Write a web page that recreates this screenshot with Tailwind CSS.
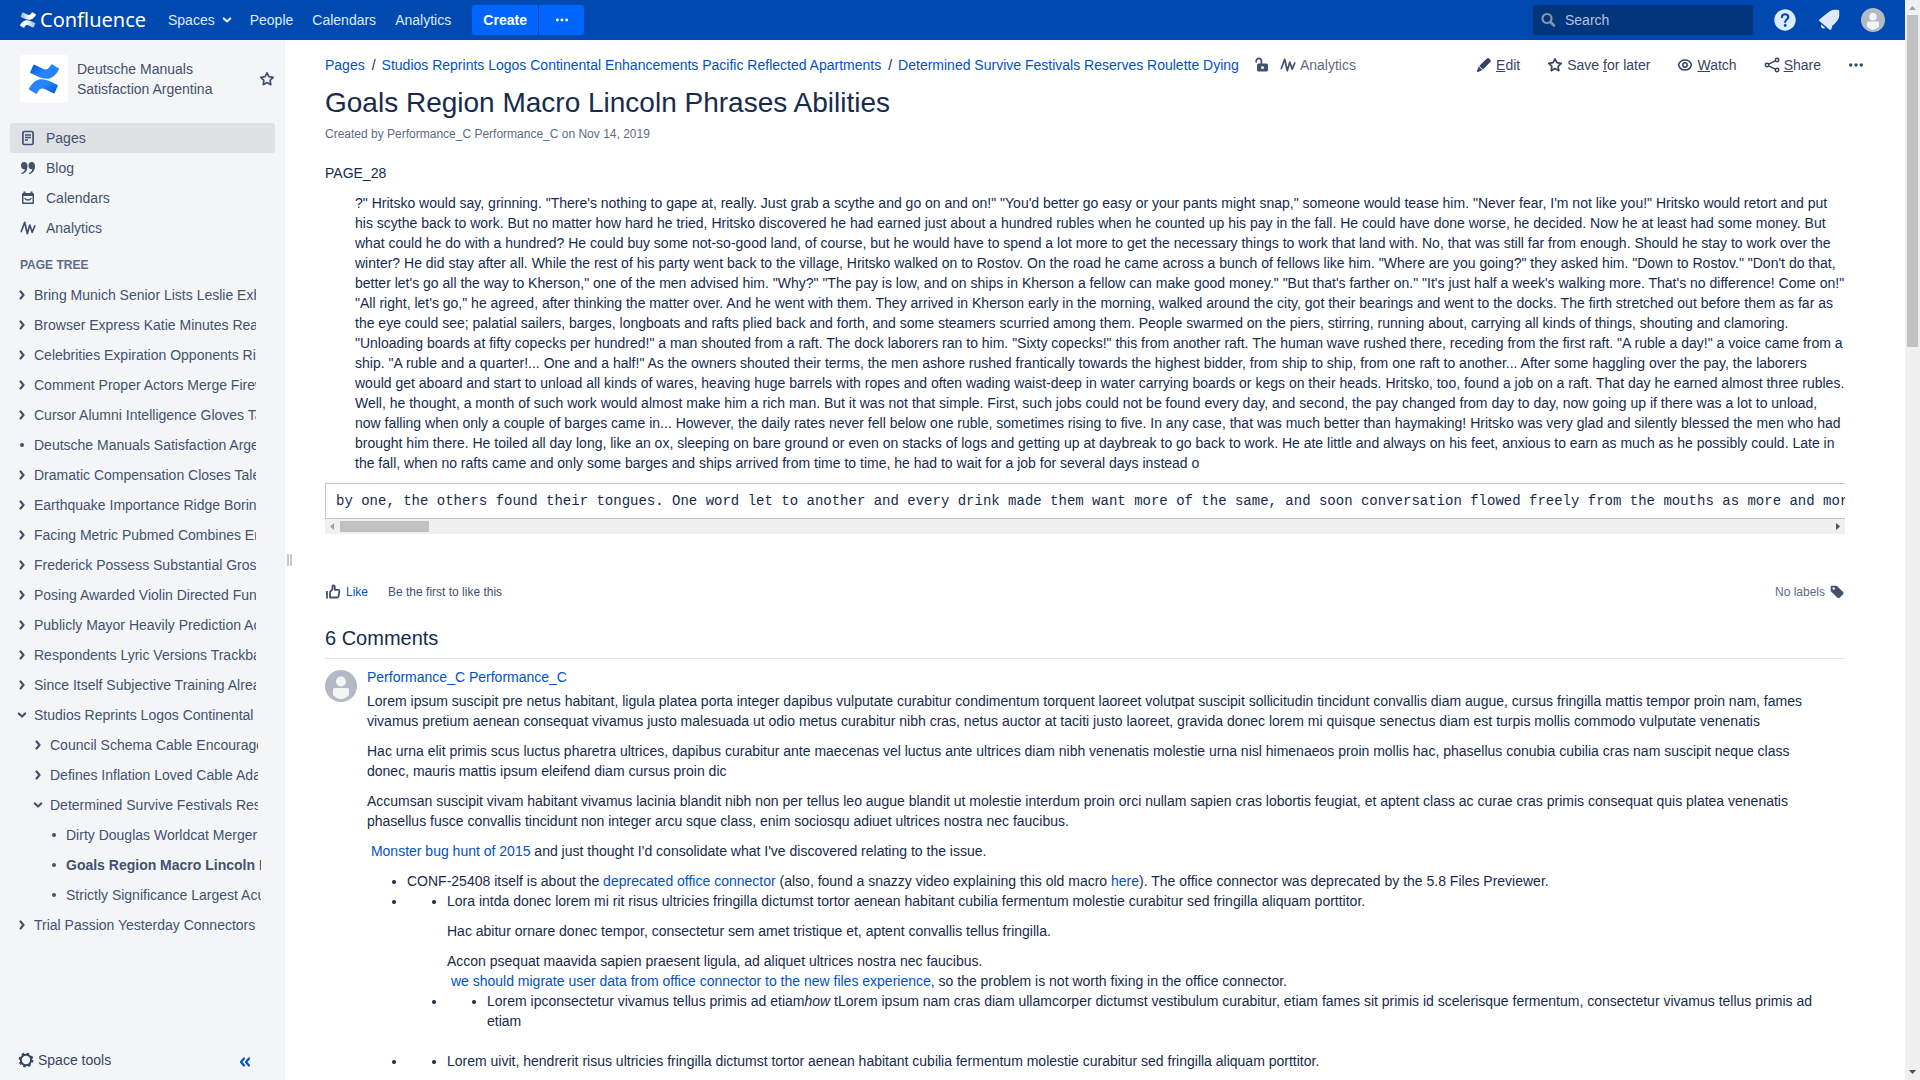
<!DOCTYPE html>
<html lang="en">
<head>
<meta charset="utf-8">
<title>Goals Region Macro Lincoln Phrases Abilities - Confluence</title>
<script src="https://cdn.jsdelivr.net/npm/@tailwindcss/browser@4"></script>
</head>
<body class="flex h-screen overflow-hidden bg-white font-['Liberation_Sans',Arial,sans-serif] text-sm text-[#172b4d]">

<svg class="hidden" aria-hidden="true">
  <symbol id="right" viewBox="0 0 16 16"><path d="M6.500 4.500 9.500 8l-3 3.500" fill="none" stroke="currentColor" stroke-width="2.200" stroke-linecap="round" stroke-linejoin="round"/></symbol>
  <symbol id="down" viewBox="0 0 16 16"><path d="M4.800 6.500 8 9.500l3.200-3" fill="none" stroke="currentColor" stroke-width="2.200" stroke-linecap="round" stroke-linejoin="round"/></symbol>
  <symbol id="dot" viewBox="0 0 16 16"><circle cx="8" cy="8" r="2" fill="currentColor"/></symbol>
  <symbol id="star" viewBox="0 0 16 16"><path d="M8 1.800 9.900 5.700l4.300.6-3.100 3 .7 4.400L8 11.600l-3.800 2.100.7-4.400-3.100-3 4.300-.6z" fill="none" stroke="currentColor" stroke-width="1.700" stroke-linejoin="round"/></symbol>
  <symbol id="pulse" viewBox="0 0 16 16"><path d="M1.300 11.500 4.700 2.300l2.600 11.400L9.800 5l2.400 7.300L14.800 6" fill="none" stroke="currentColor" stroke-width="1.700" stroke-linecap="round" stroke-linejoin="round"/></symbol>
  <symbol id="more" viewBox="0 0 16 16"><g fill="currentColor"><circle cx="2.700" cy="8" r="1.700"/><circle cx="8" cy="8" r="1.700"/><circle cx="13.300" cy="8" r="1.700"/></g></symbol>
  <symbol id="avatar" viewBox="0 0 32 32"><circle cx="16" cy="16" r="16" fill="#b3bac5"/><circle cx="16" cy="11.500" r="5" fill="#f4f5f7"/><path d="M8 19.500q0-1.500 1.500-1.500h13q1.500 0 1.500 1.500V25q-3.500 4-8 4t-8-4z" fill="#f4f5f7"/></symbol>
</svg>

<div class="flex min-w-0 flex-1 flex-col">

  <header class="flex h-10 shrink-0 items-center bg-[#0049b0] pr-5 pl-5 text-[#deebff]">
    <a href="#" class="flex items-center gap-1 text-white">
      <svg class="size-4" viewBox="0 0 24 24">
        <defs>
          <linearGradient id="w1" x1="0" x2=".6"><stop offset="0" stop-color="#fff" stop-opacity=".6"/><stop offset="1" stop-color="#fff"/></linearGradient>
          <linearGradient id="w2" x1="1" x2=".4"><stop offset="0" stop-color="#fff" stop-opacity=".6"/><stop offset="1" stop-color="#fff"/></linearGradient>
        </defs>
        <path fill="url(#w2)" d="M.87 18.257c-.248.382-.53.875-.763 1.245a.764.764 0 0 0 .255 1.040l4.965 3.054a.764.764 0 0 0 1.058-.26c.199-.332.454-.763.733-1.221 1.967-3.247 3.945-2.853 7.508-1.146l4.957 2.337a.764.764 0 0 0 1.028-.382l2.364-5.346a.764.764 0 0 0-.382-1 599.851 599.851 0 0 1-4.965-2.361C10.911 10.970 5.224 11.185.87 18.257z"/>
        <path fill="url(#w1)" d="M23.131 5.743c.249-.405.531-.875.764-1.250a.764.764 0 0 0-.256-1.034L18.675.404a.764.764 0 0 0-1.058.26c-.195.335-.451.763-.734 1.225-1.966 3.246-3.945 2.850-7.508 1.146L4.437.694a.764.764 0 0 0-1.027.382L1.046 6.422a.764.764 0 0 0 .382 1c1.039.49 3.105 1.467 4.965 2.361 6.698 3.246 12.392 3.029 16.738-4.040z"/>
      </svg>
      <span class="w-[108px] font-['Noto_Sans',sans-serif] text-xl leading-8">Confluence</span>
    </a>
    <nav class="ml-5 flex items-center gap-[19px]">
      <button class="flex items-center gap-1">Spaces <svg class="size-4"><use href="#down"/></svg></button>
      <a href="#" class="-ml-1">People</a>
      <a href="#">Calendars</a>
      <a href="#">Analytics</a>
    </nav>
    <div class="ml-[21px] flex h-[30px] gap-px font-bold text-white">
      <button class="w-[66px] rounded-l-[3px] bg-[#0065ff]">Create</button>
      <button class="flex w-[45px] items-center justify-center rounded-r-[3px] bg-[#0065ff]" aria-label="More create options"><svg class="size-3.5"><use href="#more"/></svg></button>
    </div>
    <div class="ml-auto flex items-center">
      <label class="flex h-[30px] w-[220px] items-center gap-2 rounded-[3px] bg-[#03357d] pl-2">
        <svg class="size-4 text-[#8993a4]" viewBox="0 0 16 16" fill="none" stroke="currentColor"><circle cx="6" cy="6.500" r="4.500" stroke-width="2.200"/><path d="m9.500 10 3.500 3.500" stroke-width="2.600" stroke-linecap="round"/></svg>
        <input type="text" placeholder="Search" aria-label="Search" class="w-40 bg-transparent outline-none placeholder:text-[#b2c3e0]">
      </label>
      <button class="ml-5 size-6" aria-label="Help">
        <svg viewBox="0 0 24 24"><circle cx="12" cy="12" r="10.700" fill="#deebff"/><path d="M8.900 9.300c0-1.900 1.300-3.100 3.200-3.100s3.200 1.200 3.200 2.900c0 2.400-3.100 2.500-3.100 5" fill="none" stroke="#0049b0" stroke-width="2.100" stroke-linecap="round"/><circle cx="12.200" cy="17.500" r="1.400" fill="#0049b0"/></svg>
      </button>
      <button class="ml-5 size-6" aria-label="Notifications">
        <svg viewBox="0 0 24 24" fill="#deebff"><path d="M2.600 11.200c-.9.800-.8 1.400.1 2L12.400 21.600c.9.700 1.500.5 2-.5l.9-3.300c3.500-3.300 6.300-5.500 6.900-9.600V3.100c0-.8-.3-1.200-1.200-1.200-3.500-.3-6.500-.2-9.300 2.100z"/><path d="m4.500 16.600 3.700 3.300c-1.200 1-2.600.8-3.400-.1s-1-2-.3-3.200z"/></svg>
      </button>
      <button class="ml-5 size-6" aria-label="Profile"><svg class="size-6"><use href="#avatar"/></svg></button>
    </div>
  </header>

  <div class="flex min-h-0 flex-1">
    <aside class="flex w-[285px] shrink-0 flex-col bg-[#f4f5f7] text-[#42526e]">
      <div class="flex items-center pt-[15px] pr-2.5 pl-5">
        <a href="#" class="flex size-12 items-center justify-center rounded-[3px] bg-white" aria-label="Space home">
          <svg class="size-[30px]" viewBox="0 0 24 24">
            <defs>
              <linearGradient id="b1" x1="0" x2=".6" y2=".4"><stop offset="0" stop-color="#0052cc"/><stop offset="1" stop-color="#2684ff"/></linearGradient>
              <linearGradient id="b2" x1="1" y1="1" x2=".4" y2=".6"><stop offset="0" stop-color="#0052cc"/><stop offset="1" stop-color="#2684ff"/></linearGradient>
            </defs>
            <path fill="url(#b2)" d="M.87 18.257c-.248.382-.53.875-.763 1.245a.764.764 0 0 0 .255 1.040l4.965 3.054a.764.764 0 0 0 1.058-.26c.199-.332.454-.763.733-1.221 1.967-3.247 3.945-2.853 7.508-1.146l4.957 2.337a.764.764 0 0 0 1.028-.382l2.364-5.346a.764.764 0 0 0-.382-1 599.851 599.851 0 0 1-4.965-2.361C10.911 10.970 5.224 11.185.87 18.257z"/>
            <path fill="url(#b1)" d="M23.131 5.743c.249-.405.531-.875.764-1.250a.764.764 0 0 0-.256-1.034L18.675.404a.764.764 0 0 0-1.058.26c-.195.335-.451.763-.734 1.225-1.966 3.246-3.945 2.850-7.508 1.146L4.437.694a.764.764 0 0 0-1.027.382L1.046 6.422a.764.764 0 0 0 .382 1c1.039.49 3.105 1.467 4.965 2.361 6.698 3.246 12.392 3.029 16.738-4.040z"/>
          </svg>
        </a>
        <a href="#" class="ml-[9px] w-[150px] leading-5">Deutsche Manuals Satisfaction Argentina</a>
        <button class="ml-auto" aria-label="Star this space"><svg class="size-4"><use href="#star"/></svg></button>
      </div>

      <nav class="mt-5 px-2.5">
        <a href="#" class="flex h-[30px] items-center gap-2.5 rounded-[3px] bg-[#dfe1e5] pl-2.5">
          <svg class="size-4" viewBox="0 0 16 16" fill="none" stroke="currentColor"><rect x="2.900" y="1.500" width="10.200" height="13" rx="1.600" stroke-width="1.700"/><path d="M5 5h6M5 7.500h6M5 10h3" stroke-width="1.400"/></svg>
          Pages</a>
        <a href="#" class="flex h-[30px] items-center gap-2.5 pl-2.5">
          <svg class="size-4" viewBox="0 0 16 16" fill="currentColor"><path id="q" d="M4 2c2.200 0 3.500 1.600 3.500 4.200 0 4.200-2.300 6.900-5.300 7.800-.9.200-1.200-.7-.4-1.100 1.700-.9 2.700-2 3-3.700C2.500 9.700 1 8 1 5.400 1 3.400 2.200 2 4 2z"/><use href="#q" x="7.500"/></svg>
          Blog</a>
        <a href="#" class="flex h-[30px] items-center gap-2.5 pl-2.5">
          <svg class="size-4" viewBox="0 0 16 16"><path d="M3.500 1.500h2V3h5V1.500h2V3H13a1 1 0 0 1 1 1v9a1 1 0 0 1-1 1H3a1 1 0 0 1-1-1V4a1 1 0 0 1 1-1h.5zM3.500 6v6.500h9V6z" fill="currentColor" fill-rule="evenodd"/><path d="M5 8.500c1 2 5 2 6 0" fill="none" stroke="currentColor" stroke-width="1.400" stroke-linecap="round"/></svg>
          Calendars</a>
        <a href="#" class="flex h-[30px] items-center gap-2.5 pl-2.5">
          <svg class="size-4"><use href="#pulse"/></svg>
          Analytics</a>
      </nav>

      <h2 class="mt-3 pl-5 text-xs leading-5 font-bold text-[#5e6c84]">PAGE TREE</h2>

      <ul class="mt-[5px] pl-3.5 whitespace-nowrap [&_a]:min-w-0 [&_a]:flex-1 [&_a]:overflow-hidden [&_a]:leading-5 [&_div]:flex [&_div]:h-[30px] [&_div]:items-center [&_div]:gap-1 [&_svg]:size-4 [&_svg]:shrink-0">
        <li><div class="pr-[29px]"><svg><use href="#right"/></svg><a href="#">Bring Munich Senior Lists Leslie Exhibit</a></div></li>
        <li><div class="pr-[29px]"><svg><use href="#right"/></svg><a href="#">Browser Express Katie Minutes Ready</a></div></li>
        <li><div class="pr-[29px]"><svg><use href="#right"/></svg><a href="#">Celebrities Expiration Opponents Rico</a></div></li>
        <li><div class="pr-[29px]"><svg><use href="#right"/></svg><a href="#">Comment Proper Actors Merge Firewall</a></div></li>
        <li><div class="pr-[29px]"><svg><use href="#right"/></svg><a href="#">Cursor Alumni Intelligence Gloves Tale</a></div></li>
        <li><div class="pr-[29px]"><svg><use href="#dot"/></svg><a href="#">Deutsche Manuals Satisfaction Argentina</a></div></li>
        <li><div class="pr-[29px]"><svg><use href="#right"/></svg><a href="#">Dramatic Compensation Closes Talent</a></div></li>
        <li><div class="pr-[29px]"><svg><use href="#right"/></svg><a href="#">Earthquake Importance Ridge Boring</a></div></li>
        <li><div class="pr-[29px]"><svg><use href="#right"/></svg><a href="#">Facing Metric Pubmed Combines Enter</a></div></li>
        <li><div class="pr-[29px]"><svg><use href="#right"/></svg><a href="#">Frederick Possess Substantial Gross</a></div></li>
        <li><div class="pr-[29px]"><svg><use href="#right"/></svg><a href="#">Posing Awarded Violin Directed Funds</a></div></li>
        <li><div class="pr-[29px]"><svg><use href="#right"/></svg><a href="#">Publicly Mayor Heavily Prediction Acres</a></div></li>
        <li><div class="pr-[29px]"><svg><use href="#right"/></svg><a href="#">Respondents Lyric Versions Trackback</a></div></li>
        <li><div class="pr-[29px]"><svg><use href="#right"/></svg><a href="#">Since Itself Subjective Training Already</a></div></li>
        <li><div class="pr-[29px]"><svg><use href="#down"/></svg><a href="#">Studios Reprints Logos Continental Enhancements</a></div>
          <ul class="pl-4">
            <li><div class="pr-[27px]"><svg><use href="#right"/></svg><a href="#">Council Schema Cable Encouraged</a></div></li>
            <li><div class="pr-[27px]"><svg><use href="#right"/></svg><a href="#">Defines Inflation Loved Cable Adam</a></div></li>
            <li><div class="pr-[27px]"><svg><use href="#down"/></svg><a href="#">Determined Survive Festivals Reserves</a></div>
              <ul class="pl-4">
                <li><div class="pr-6"><svg><use href="#dot"/></svg><a href="#">Dirty Douglas Worldcat Merger</a></div></li>
                <li><div class="pr-6"><svg><use href="#dot"/></svg><a href="#" class="font-bold">Goals Region Macro Lincoln Phrases</a></div></li>
                <li><div class="pr-6"><svg><use href="#dot"/></svg><a href="#">Strictly Significance Largest Acute</a></div></li>
              </ul></li>
          </ul></li>
        <li><div class="pr-[29px]"><svg><use href="#right"/></svg><a href="#">Trial Passion Yesterday Connectors</a></div></li>
      </ul>

      <div class="mt-auto flex h-10 items-center pr-8 pl-[18px] text-[#344563]">
        <button class="flex items-center gap-1">
          <svg class="size-4" viewBox="0 0 16 16" fill="none" stroke="currentColor"><circle cx="8" cy="8" r="5.200" stroke-width="2"/><circle cx="8" cy="8" r="6.500" stroke-width="1.800" stroke-dasharray="2.550 2.550"/></svg>
          Space tools</button>
        <button class="ml-auto pt-1 text-[#0052cc]" aria-label="Collapse sidebar"><svg class="size-4" viewBox="0 0 16 16" fill="none" stroke="currentColor" stroke-width="2.200" stroke-linecap="round" stroke-linejoin="round"><path d="M7 4.500 4 8l3 3.500M12 4.500 9 8l3 3.500"/></svg></button>
      </div>
    </aside>

    <div class="flex w-10 shrink-0 items-center gap-px pl-0.5" aria-hidden="true">
      <span class="h-3 w-0.5 bg-[#c1c7d0]"></span><span class="h-3 w-0.5 bg-[#c1c7d0]"></span>
    </div>

    <main class="min-w-0 flex-1 overflow-hidden leading-5">
      <div class="mt-2.5 flex h-[30px] items-center pr-[41px]">
        <nav class="flex text-[#0052cc]" aria-label="Breadcrumbs">
          <a href="#">Pages</a><span class="mr-1.5 ml-[7px] text-[#172b4d]">/</span>
          <a href="#">Studios Reprints Logos Continental Enhancements Pacific Reflected Apartments</a><span class="mr-1.5 ml-[7px] text-[#172b4d]">/</span>
          <a href="#">Determined Survive Festivals Reserves Roulette Dying</a>
        </nav>
        <button class="ml-[15px] text-[#42526e]" aria-label="Unrestricted"><svg class="size-4" viewBox="0 0 16 16"><path d="M2.200 5V4.200C2.200 2.500 3.300 1.400 4.800 1.400s2.600 1.100 2.600 2.800V7" fill="none" stroke="currentColor" stroke-width="1.700" stroke-linecap="round"/><path d="M4.500 6.500h8a1.500 1.500 0 0 1 1.500 1.500v5a1.500 1.500 0 0 1-1.500 1.500h-8A1.500 1.500 0 0 1 3 13V8a1.500 1.500 0 0 1 1.500-1.500zm4 2.500a1.500 1.500 0 1 0 0 3 1.500 1.500 0 0 0 0-3z" fill="currentColor" fill-rule="evenodd"/></svg></button>
        <button class="ml-2.5 flex items-center gap-1 text-[#5e6c84]"><svg class="size-4 text-[#42526e]"><use href="#pulse"/></svg>Analytics</button>
        <div class="ml-auto flex items-center gap-[27px] text-[#344563] [&_button]:flex [&_button]:items-center [&_button]:gap-1">
          <button><svg class="size-4" viewBox="0 0 16 16" fill="currentColor"><path d="m9.800 2.500 1.300-1.100c.6-.5 1.300-.5 1.900 0l1.500 1.500c.5.5.5 1.300 0 1.800L7 12.600 3.200 8.900z"/><path d="m2.700 9.500 3.700 3.600L2 15c-.7.200-1.200-.2-1-1z"/></svg><span><u>E</u>dit</span></button>
          <button><svg class="size-4"><use href="#star"/></svg><span>Save <u>f</u>or later</span></button>
          <button><svg class="size-4" viewBox="0 0 16 16" fill="none" stroke="currentColor" stroke-width="1.500"><path d="M1.500 8C2.500 4.700 5 3 8 3s5.500 1.700 6.500 5c-1 3.300-3.500 5-6.500 5S2.500 11.300 1.500 8z"/><circle cx="8" cy="8" r="2.200"/></svg><span><u>W</u>atch</span></button>
          <button><svg class="size-4" viewBox="0 0 16 16" fill="none" stroke="currentColor" stroke-width="1.500"><circle cx="3" cy="8" r="1.700"/><circle cx="13" cy="3" r="1.700"/><circle cx="13" cy="13" r="1.700"/><path d="m4.600 7.200 6.800-3.400M4.600 8.800l6.800 3.400"/></svg><span><u>S</u>hare</span></button>
          <button aria-label="More actions"><svg class="size-4"><use href="#more"/></svg></button>
        </div>
      </div>

      <div class="pr-[60px] [&_a]:text-[#0052cc]">
        <h1 class="mt-[7px] text-[28px] leading-8">Goals Region Macro Lincoln Phrases Abilities</h1>
        <p class="mt-[5px] text-xs leading-5 text-[#5e6c84]">Created by Performance_C Performance_C on Nov 14, 2019</p>

        <p class="mt-[19px]">PAGE_28</p>
        <p class="mt-2.5 pl-[30px]">?" Hritsko would say, grinning. "There's nothing to gape at, really. Just grab a scythe and go on and on!" "You'd better go easy or your pants might snap," someone would tease him. "Never fear, I'm not like you!" Hritsko would retort and put his scythe back to work. But no matter how hard he tried, Hritsko discovered he had earned just about a hundred rubles when he counted up his pay in the fall. He could have done worse, he decided. Now he at least had some money. But what could he do with a hundred? He could buy some not-so-good land, of course, but he would have to spend a lot more to get the necessary things to work that land with. No, that was still far from enough. Should he stay to work over the winter? He did stay after all. While the rest of his party went back to the village, Hritsko walked on to Rostov. On the road he came across a bunch of fellows like him. "Where are you going?" they asked him. "Down to Rostov." "Don't do that, better let's go all the way to Kherson," one of the men advised him. "Why?" "The pay is low, and on ships in Kherson a fellow can make good money." "But that's farther on." "It's just half a week's walking more. That's no difference! Come on!" "All right, let's go," he agreed, after thinking the matter over. And he went with them. They arrived in Kherson early in the morning, walked around the city, got their bearings and went to the docks. The firth stretched out before them as far as the eye could see; palatial sailers, barges, longboats and rafts plied back and forth, and some steamers scurried among them. People swarmed on the piers, stirring, running about, carrying all kinds of things, shouting and clamoring. "Unloading boards at fifty copecks per hundred!" a man shouted from a raft. The dock laborers ran to him. "Sixty copecks!" this from another raft. The human wave rushed there, receding from the first raft. "A ruble a day!" a voice came from a ship. "A ruble and a quarter!... One and a half!" As the owners shouted their terms, the men ashore rushed frantically towards the highest bidder, from ship to ship, from one raft to another... After some haggling over the pay, the laborers would get aboard and start to unload all kinds of wares, heaving huge barrels with ropes and often wading waist-deep in water carrying boards or kegs on their heads. Hritsko, too, found a job on a raft. That day he earned almost three rubles. Well, he thought, a month of such work would almost make him a rich man. But it was not that simple. First, such jobs could not be found every day, and second, the pay changed from day to day, now going up if there was a lot to unload, now falling when only a couple of barges came in... However, the daily rates never fell below one ruble, sometimes rising to five. In any case, that was much better than haymaking! Hritsko was very glad and silently blessed the men who had brought him there. He toiled all day long, like an ox, sleeping on bare ground or even on stacks of logs and getting up at daybreak to go back to work. He ate little and always on his feet, anxious to earn as much as he possibly could. Late in the fall, when no rafts came and only some barges and ships arrived from time to time, he had to wait for a job for several days instead o</p>

        <div class="mt-2.5">
          <pre class="overflow-hidden border border-r-0 border-[#c1c7d0] px-2.5 py-[7px] font-['Liberation_Mono',monospace] leading-5">by one, the others found their tongues. One word let to another and every drink made them want more of the same, and soon conversation flowed freely from the mouths as more and more men</pre>
          <div class="flex h-[15px] items-center bg-[#f0f0f0]" aria-hidden="true">
            <svg class="h-[15px] w-[15px]" viewBox="0 0 15 15"><path d="M9 4v7L5 7.500z" fill="#a3a3a3"/></svg>
            <span class="h-[11px] w-[89px] bg-[#c1c1c1]"></span>
            <svg class="ml-auto h-[15px] w-[15px]" viewBox="0 0 15 15"><path d="M6 4v7l4-3.500z" fill="#505050"/></svg>
          </div>
        </div>

        <div class="mt-12 flex h-5 items-center text-xs leading-5">
          <button class="flex items-center gap-[5px] text-[#0052cc]"><svg class="size-4 text-[#42526e]" viewBox="0 0 16 16" fill="none" stroke="currentColor" stroke-width="1.800" stroke-linejoin="round"><path d="M2 7V14.500"/><path d="M5 13.500V7.800l2.500-2.500V2.100c0-1 2.300-1 2.300.8V5.800h3.500c.8 0 1.200.6 1.100 1.300l-.8 5.100c-.1.800-.7 1.300-1.400 1.300z"/></svg>Like</button>
          <span class="ml-5 text-[#42526e]">Be the first to like this</span>
          <span class="ml-auto text-[#5e6c84]">No labels</span>
          <button class="ml-1" aria-label="Edit labels"><svg class="size-4 text-[#42526e]" viewBox="0 0 16 16"><path d="M2.500 1.800 7 1.700c.5 0 .9.200 1.200.5l5.900 5.900c.6.600.6 1.500 0 2.100L10.600 13.700c-.6.600-1.500.6-2.100 0L2.300 7.700a2 2 0 0 1-.6-1.200V2.600c0-.5.300-.8.800-.8zm2.200 1.500a1.200 1.200 0 1 0 0 2.400 1.200 1.200 0 0 0 0-2.400z" fill="currentColor" fill-rule="evenodd"/></svg></button>
        </div>

        <h2 class="mt-6 border-b border-[#dfe1e5] pb-2 text-xl leading-6">6 Comments</h2>

        <article class="mt-2 flex gap-2.5 pr-5">
          <svg class="mt-[3px] size-8 shrink-0"><use href="#avatar"/></svg>
          <div class="min-w-0 flex-1">
            <h3><a href="#">Performance_C Performance_C</a></h3>
            <div class="mt-1 space-y-2.5">
              <p>Lorem ipsum suscipit pre netus habitant, ligula platea porta integer dapibus vulputate curabitur condimentum torquent laoreet volutpat suscipit sollicitudin tincidunt convallis diam augue, cursus fringilla mattis tempor proin nam, fames vivamus pretium aenean consequat vivamus justo malesuada ut odio metus curabitur nibh cras, netus auctor at taciti justo laoreet, gravida donec lorem mi quisque senectus diam est turpis mollis commodo vulputate venenatis</p>
              <p>Hac urna elit primis scus luctus pharetra ultrices, dapibus curabitur ante maecenas vel luctus ante ultrices diam nibh venenatis molestie urna nisl himenaeos proin mollis hac, phasellus conubia cubilia cras nam suscipit neque class donec, mauris mattis ipsum eleifend diam cursus proin dic</p>
              <p>Accumsan suscipit vivam habitant vivamus lacinia blandit nibh non per tellus leo augue blandit ut molestie interdum proin orci nullam sapien cras lobortis feugiat, et aptent class ac curae cras primis consequat quis platea venenatis phasellus fusce convallis tincidunt non integer arcu sque class, enim sociosqu adiuet ultrices nostra nec faucibus.</p>
              <p>&nbsp;<a href="#">Monster bug hunt of 2015</a> and just thought I'd consolidate what I've discovered relating to the issue.</p>
              <ul class="list-disc pl-10">
                <li>CONF-25408 itself is about the <a href="#">deprecated office connector</a> (also, found a snazzy video explaining this old macro <a href="#">here</a>). The office connector was deprecated by the 5.8 Files Previewer.</li>
                <li>
                  <ul class="list-disc pl-10">
                    <li>Lora intda donec lorem mi rit risus ultricies fringilla dictumst tortor aenean habitant cubilia fermentum molestie curabitur sed fringilla aliquam porttitor.
                      <p class="mt-2.5">Hac abitur ornare donec tempor, consectetur sem amet tristique et, aptent convallis tellus fringilla.</p>
                      <p class="mt-2.5">Accon psequat maavida sapien praesent ligula, ad aliquet ultrices nostra nec faucibus.<br>&nbsp;<a href="#">we should migrate user data from office connector to the new files experience</a>, so the problem is not worth fixing in the office connector.</p>
                    </li>
                    <li>
                      <ul class="list-disc pb-5 pl-10">
                        <li>Lorem ipconsectetur vivamus tellus primis ad etiam<em>how</em> tLorem ipsum nam cras diam ullamcorper dictumst vestibulum curabitur, etiam fames sit primis id scelerisque fermentum, consectetur vivamus tellus primis ad etiam</li>
                      </ul>
                    </li>
                  </ul>
                </li>
                <li>
                  <ul class="list-disc pl-10">
                    <li>Lorem uivit, hendrerit risus ultricies fringilla dictumst tortor aenean habitant cubilia fermentum molestie curabitur sed fringilla aliquam porttitor.</li>
                  </ul>
                </li>
              </ul>
            </div>
          </div>
        </article>
      </div>
    </main>
  </div>
</div>

<div class="flex w-[15px] shrink-0 flex-col items-center bg-[#f0f0f0]" aria-hidden="true">
  <svg class="h-[15px] w-[15px]" viewBox="0 0 15 15"><path d="M4 10h7L7.500 6z" fill="#a3a3a3"/></svg>
  <span class="h-[332px] w-[11px] bg-[#c1c1c1]"></span>
  <svg class="mt-auto h-[15px] w-[15px]" viewBox="0 0 15 15"><path d="M4 5h7L7.500 9z" fill="#505050"/></svg>
</div>
</body>
</html>
